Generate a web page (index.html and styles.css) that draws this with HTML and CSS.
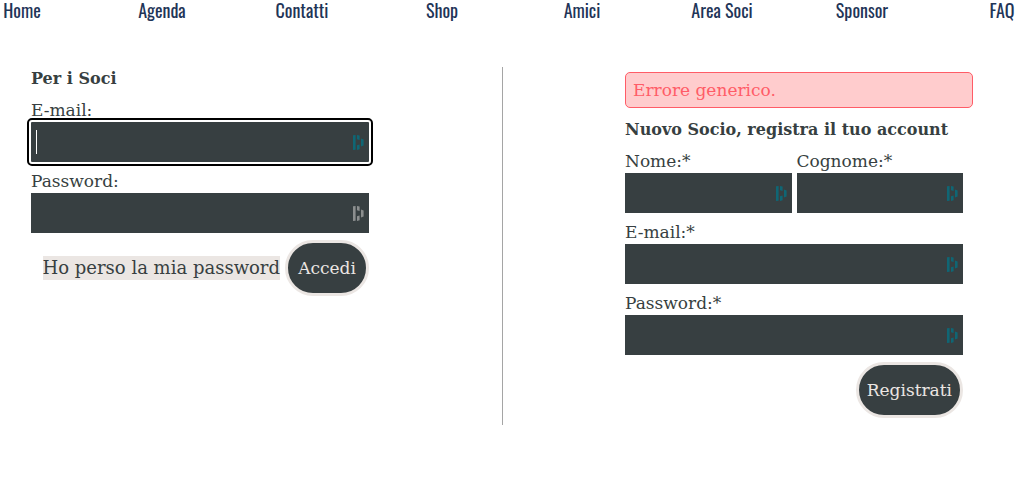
FILE: index.html
```html
<!DOCTYPE html>
<html lang="it">
<head>
    <meta charset="UTF-8">
    <meta name="viewport" content="width=device-width, initial-scale=1.0">
    <title>Area Soci</title>
    <link rel="stylesheet" href="styles.css">
</head>
<body>

<svg class="sprite" aria-hidden="true">
    <symbol id="key-icon" viewBox="0 0 11 15">
        <path d="M0 .3L2.6 0v14.7L0 15zM4 0l2.6.6V5L4 4.2zM4 10.2l2.6-.8v4.8L4 15zM8 3.6l2.6.8v6.2L8 11.4z"/>
    </symbol>
</svg>

<nav class="main-nav">
    <ul class="nav-list">
        <li><a href="#">Home</a></li>
        <li><a href="#">Agenda</a></li>
        <li><a href="#">Contatti</a></li>
        <li><a href="#">Shop</a></li>
        <li><a href="#">Amici</a></li>
        <li><a href="#">Area Soci</a></li>
        <li><a href="#">Sponsor</a></li>
        <li><a href="#">FAQ</a></li>
    </ul>
</nav>

<main class="account">
    <!-- Login -->
    <section class="login">
        <form class="form">
            <h2 class="title">Per i Soci</h2>
            <div class="field">
                <label for="login-email">E-mail:</label>
                <div class="control">
                    <input class="active" type="email" id="login-email">
                    <span class="caret"></span>
                    <svg class="icon"><use href="#key-icon"/></svg>
                </div>
            </div>
            <div class="field">
                <label for="login-password">Password:</label>
                <div class="control">
                    <input type="password" id="login-password">
                    <svg class="icon icon-off"><use href="#key-icon"/></svg>
                </div>
            </div>
            <div class="actions">
                <a class="lost" href="#">Ho perso la mia password</a>
                <button class="btn" type="button">Accedi</button>
            </div>
        </form>
    </section>

    <!-- Registration -->
    <section class="register">
        <p class="error">Errore generico.</p>
        <form class="form">
            <h2 class="title">Nuovo Socio, registra il tuo account</h2>
            <div class="row">
                <div class="field">
                    <label for="name">Nome:*</label>
                    <div class="control">
                        <input type="text" id="name">
                        <svg class="icon"><use href="#key-icon"/></svg>
                    </div>
                </div>
                <div class="field">
                    <label for="surname">Cognome:*</label>
                    <div class="control">
                        <input type="text" id="surname">
                        <svg class="icon"><use href="#key-icon"/></svg>
                    </div>
                </div>
            </div>
            <div class="field">
                <label for="email">E-mail:*</label>
                <div class="control">
                    <input type="email" id="email">
                    <svg class="icon"><use href="#key-icon"/></svg>
                </div>
            </div>
            <div class="field">
                <label for="password">Password:*</label>
                <div class="control">
                    <input type="password" id="password">
                    <svg class="icon"><use href="#key-icon"/></svg>
                </div>
            </div>
            <div class="actions">
                <button class="btn" type="button">Registrati</button>
            </div>
        </form>
    </section>
</main>

</body>
</html>
```
FILE: styles.css
```css
* {
    box-sizing: border-box;
}
html {
    overflow-x: hidden;
}
body {
    margin: 0;
    font-family: "DejaVu Serif", serif;
    font-size: 17px;
    line-height: 24px;
    color: #373f41;
    background-color: #ffffff;
}
.sprite {
    display: none;
}
/* Navigation */
.nav-list {
    display: flex;
    margin: 0 -38px 0 -48px;
    padding: 0;
    list-style: none;
    font-family: Oswald, "Liberation Sans Narrow", "Open Sans Condensed", "Roboto Condensed", "Liberation Sans", sans-serif;
    font-size: 18px;
    line-height: 20px;
}
.nav-list li {
    flex: 1;
    text-align: center;
}
.nav-list a {
    color: #1f3558;
    text-decoration: none;
}
/* Columns */
.account {
    display: grid;
    grid-template-columns: 503fr 531fr;
    margin-top: 47px;
}
.login {
    padding-left: 31px;
    border-right: 1px solid #a5a5a5;
}
.register {
    padding: 5px 61px 7px 122px;
}
.form {
    display: flex;
    flex-direction: column;
    gap: 7px;
    max-width: 338px;
}
.title {
    margin: 0;
    font-size: 16px;
    line-height: 24px;
    white-space: nowrap;
}
.row {
    display: flex;
    gap: 5px;
}
.row .field {
    flex: 1;
}
.field label {
    display: block;
}
.control {
    position: relative;
}
.control input {
    display: block;
    width: 100%;
    height: 40px;
    padding: 5px 20px 5px 5px;
    border: none;
    font: inherit;
    color: #ffffff;
    background-color: #373f41;
}
.control input.active {
    outline: 2px solid #000000;
    outline-offset: 2px;
    border-radius: 1px;
    box-shadow: 0 0 0 2px #ffffff;
}
.caret {
    position: absolute;
    left: 5px;
    top: 8px;
    width: 1px;
    height: 24px;
    background-color: #ffffff;
}
.icon {
    position: absolute;
    right: 5px;
    top: 13px;
    width: 11px;
    height: 15px;
    fill: #0f6674;
}
.icon-off {
    fill: #8b8e8e;
}
.actions {
    display: flex;
    justify-content: flex-end;
    align-items: center;
    gap: 5px;
}
.lost {
    font-size: 18px;
    color: inherit;
    text-decoration: none;
    background-color: #ebe6e3;
}
.btn {
    min-width: 84px;
    height: 56px;
    padding: 0 8px;
    border: 3px solid #ebe6e3;
    border-radius: 28px;
    font: inherit;
    color: #ebe6e3;
    background-color: #373f41;
    cursor: pointer;
}
.error {
    margin: 0 0 10px;
    padding: 5px 7px;
    border: 1px solid #ff5c67;
    border-radius: 5px;
    color: #ff5c67;
    background-color: #ffcccd;
}
```
